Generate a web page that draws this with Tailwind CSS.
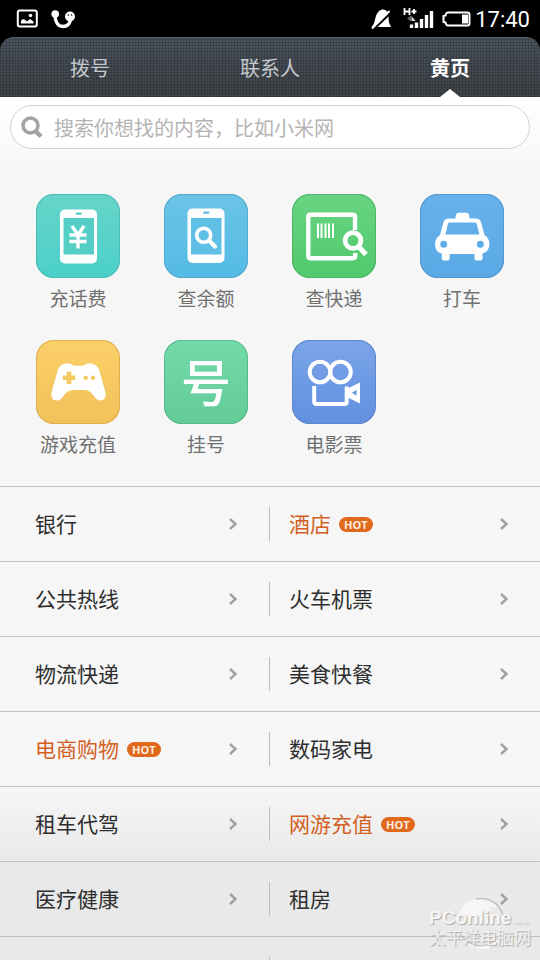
<!DOCTYPE html>
<html lang="zh-CN">
<head>
<meta charset="utf-8">
<meta name="viewport" content="width=device-width, initial-scale=1">
<title>黄页</title>
<script src="https://cdn.jsdelivr.net/npm/@tailwindcss/browser@4"></script>
</head>
<body class="flex h-screen flex-col overflow-hidden bg-black font-['Noto_Sans','Noto_Sans_CJK_SC',sans-serif]">

<svg class="hidden" aria-hidden="true">
  <symbol id="chevron" viewBox="0 0 10 14"><path d="M2 2l5.500 5L2 12" fill="none" stroke="#a0a0a0" stroke-width="2.400"/></symbol>
</svg>

<!-- Status bar -->
<div class="flex h-[37px] shrink-0 items-center justify-between pt-px pr-[10px] pl-4 text-white">
  <div class="flex items-center gap-3">
    <svg class="h-[20px] w-[22px]" viewBox="0 0 22 20" aria-hidden="true">
      <rect x="1.800" y="1.500" width="19" height="16" rx="2" fill="none" stroke="#fff" stroke-width="2"/>
      <path d="M5 14.500v-2.500c1-2 3-2.500 4.500-.8l1.500 1.300 3-2.500 3.500 2.500v2z" fill="#fff"/>
      <circle cx="14.500" cy="6.500" r="1.800" fill="#fff"/>
    </svg>
    <svg class="h-[20px] w-[26px]" viewBox="0 0 26 20" aria-hidden="true">
      <path d="M5 6c0 7 3 11.500 8 11.500S20.500 14 20.500 9" fill="none" stroke="#fff" stroke-width="3.400"/>
      <circle cx="5.200" cy="5" r="3.800" fill="#fff"/>
      <circle cx="20" cy="7.500" r="5" fill="#fff"/>
      <circle cx="18.300" cy="6" r=".8"/><circle cx="21.500" cy="6" r=".8"/>
    </svg>
  </div>
  <div class="flex items-center">
    <svg class="h-[22px] w-[22px]" viewBox="0 0 22 22" aria-hidden="true">
      <path d="M1.500 19c3.500-3.500 3-7 4.500-11C7.500 4 10 1.500 13 1.500c3.500 0 5.500 3 5.500 7 0 4 .5 7 2.500 10.500z" fill="#fff"/>
      <path d="M3.500 21.500L21.500 4" stroke="#000" stroke-width="2.200"/>
      <path d="M2 20.500L19.500 3" stroke="#fff" stroke-width="2"/>
    </svg>
    <svg class="ml-[10px] h-[22px] w-[32px]" viewBox="0 0 32 22" aria-hidden="true">
      <path d="M2.500 0v7M7.500 0v7M2.500 3.500h5M9.500 3.500h5M12 1v5" stroke="#fff" stroke-width="1.800"/>
      <path d="M5 10.500l4-3v6z" fill="#666"/>
      <path d="M9.500 16.500v3.500M14.500 14.500v5.500M19.500 11v9M24.500 7v13M29.500 3v17" stroke="#fff" stroke-width="3.400"/>
      <path d="M9.500 8l4 5h-4z" fill="#ddd"/>
    </svg>
    <svg class="ml-[8px] h-[16px] w-[30px]" viewBox="0 0 30 16" aria-hidden="true">
      <path d="M6 1.500h19.500q2 0 2 2v9q0 2-2 2H6q-1.500 0-2-1.500l-.5-1.500-2-.5v-6l2-.5.500-1.500q.5-1.500 2-1.500z" fill="none" stroke="#fff" stroke-width="2"/>
      <path d="M20 3.500h6v9h-6z" fill="#fff"/>
    </svg>
    <time class="ml-[3px] pt-px font-['Roboto',sans-serif] text-[22px] leading-6">17:40</time>
  </div>
</div>

<!-- Tabs -->
<nav class="grid h-[60px] shrink-0 grid-cols-3 rounded-t-[14px] border-t border-[#555c63] bg-[repeating-linear-gradient(0deg,#00000028_0_1px,transparent_1px_3px),repeating-linear-gradient(90deg,#00000028_0_1px,transparent_1px_3px),linear-gradient(#4b545d,#444a53_50%,#404345)] text-[20px] leading-6 text-[#c4c8cd]">
  <a href="#dial" class="flex items-center justify-center pt-[2px]">拨号</a>
  <a href="#contacts" class="flex items-center justify-center pt-[2px]">联系人</a>
  <a href="#yellow" aria-current="page" class="relative flex items-center justify-center pt-[2px] font-bold text-white">黄页
    <svg class="absolute bottom-0 left-1/2 h-2 w-5 -translate-x-1/2" viewBox="0 0 20 8" aria-hidden="true"><path d="M0 8L10 0l10 8z" fill="#fff"/></svg>
  </a>
</nav>

<main class="relative min-h-0 flex-1 overflow-hidden bg-[linear-gradient(to_bottom,#fff_0,#f6f6f6_80px,#f6f6f6_80%,#e9e9e9_89%)]">
  <!-- Search -->
  <form class="px-[10px] pt-2" role="search">
    <div class="flex h-[44px] items-center gap-[11px] rounded-full border border-[#d3d3d3] bg-white pl-[10px]">
      <svg class="h-[24px] w-[22px] shrink-0" viewBox="0 0 22 24" aria-hidden="true">
        <circle cx="9.500" cy="10.500" r="7.500" fill="none" stroke="#a3a3a3" stroke-width="3.600"/>
        <path d="M14.500 16l5.500 5.500" stroke="#a3a3a3" stroke-width="4.400"/>
      </svg>
      <input type="search" aria-label="搜索" class="min-w-0 flex-1 bg-transparent pt-1 text-[20px] leading-6 outline-none placeholder:text-[#b4b4b4]" placeholder="搜索你想找的内容，比如小米网">
    </div>
  </form>

  <!-- Services -->
  <section class="grid grid-cols-4 gap-y-[25px] px-[14px] pt-[45px] pb-[25px] text-[19px] leading-8 text-[#707070]">
    <a href="#" class="flex flex-col items-center">
      <svg class="h-[84px] w-[84px] rounded-[18px] bg-linear-to-b from-[#66d4c8] to-[#4bd0cb] ring-1 ring-[#4dbdb4] ring-inset" viewBox="0 0 84 84" aria-hidden="true">
        <rect x="24" y="15.500" width="37" height="54" rx="5" fill="#fff"/>
        <path d="M27.500 24H58v36.500H27.500z" fill="#55cfc6"/>
        <rect x="39.500" y="18.500" width="6.500" height="2.200" rx="1" fill="#55cfc6"/>
        <path d="M36 32l6 9 6-9M42 41v13.500M33.500 41h17M33.500 47.500h17" fill="none" stroke="#fff" stroke-width="3.400"/>
      </svg>
      <span class="pt-[5px]">充话费</span>
    </a>
    <a href="#" class="flex flex-col items-center">
      <svg class="h-[84px] w-[84px] rounded-[18px] bg-linear-to-b from-[#6bc4e6] to-[#54bbe5] ring-1 ring-[#55a9cc] ring-inset" viewBox="0 0 84 84" aria-hidden="true">
        <rect x="23.500" y="14.500" width="37" height="54.500" rx="5" fill="#fff"/>
        <path d="M27 24h30.500v36.500H27z" fill="#60bfe5"/>
        <rect x="39" y="17.500" width="6.500" height="2.200" rx="1" fill="#60bfe5"/>
        <circle cx="39.700" cy="41.300" r="7" fill="none" stroke="#fff" stroke-width="3.600"/>
        <path d="M45 46.500l6 6" stroke="#fff" stroke-width="4.200" stroke-linecap="round"/>
      </svg>
      <span class="pt-[5px]">查余额</span>
    </a>
    <a href="#" class="flex flex-col items-center">
      <svg class="h-[84px] w-[84px] rounded-[18px] bg-linear-to-b from-[#68d483] to-[#50c96c] ring-1 ring-[#4db465] ring-inset" viewBox="0 0 84 84" aria-hidden="true">
        <path d="M63 36V23q0-2.200-2.200-2.200H18.500q-2.200 0-2.200 2.200v39q0 2.200 2.200 2.200H61q2.200 0 2.200-2.200v-3" fill="none" stroke="#fff" stroke-width="4.400"/>
        <path d="M26 29.500v14.500M29.500 29.500v14.500M33.500 29.500v14.500M37 29.500v14.500M41 29.500v14.500" stroke="#fff" stroke-width="2"/>
        <circle cx="61" cy="46.500" r="7.900" fill="none" stroke="#fff" stroke-width="4.800"/>
        <path d="M67 53l7 7.500" stroke="#fff" stroke-width="5"/>
      </svg>
      <span class="pt-[5px]">查快递</span>
    </a>
    <a href="#" class="flex flex-col items-center">
      <svg class="h-[84px] w-[84px] rounded-[18px] bg-linear-to-b from-[#67b1ea] to-[#59a9e6] ring-1 ring-[#5596cc] ring-inset" viewBox="0 0 84 84" aria-hidden="true">
        <path d="M35 25.500l1.200-5q.5-1.700 2-1.700h8.600q1.500 0 2 1.700l1.200 5z" fill="#fff"/>
        <path fill-rule="evenodd" fill="#fff" d="M29 24.500h27q4 0 5 3.500l3.500 13q5 3 5 10-1 7-7 8.500v5q0 2-2 2h-4q-2 0-2-2V60H29.700v4.500q0 2-2 2h-4q-2 0-2-2v-5Q15.500 58 15 51q0-7 5-10L23.500 28q1.200-3.500 5.500-3.500zM29.500 28.500q-1.200 0-1.600 1.400L25.500 40.500h34L56.800 30q-.4-1.500-1.800-1.500zM23.700 46.800a3.500 3.500 0 1 0 0 7 3.500 3.500 0 1 0 0-7zM60.300 46.800a3.500 3.500 0 1 0 0 7 3.500 3.500 0 1 0 0-7z"/>
      </svg>
      <span class="pt-[5px]">打车</span>
    </a>
    <a href="#" class="flex flex-col items-center">
      <svg class="h-[84px] w-[84px] rounded-[18px] bg-linear-to-b from-[#fbd068] to-[#f2c15a] ring-1 ring-[#dcb055] ring-inset" viewBox="0 0 84 84" aria-hidden="true">
        <path d="M30 23.500q4-.8 6.500 1.500 1 .7 2 .7h8q1 0 2-.7 2.500-2.300 6.500-1.500 5.500.5 8 6l6 21c1.800 6-.5 10-4.500 10q-3.500 0-6.500-4.500-4-6-9-6h-12.500q-5 0-9 6-3 4.500-6.500 4.500c-4 0-7-3-5-10l6-21q2-5.500 8-6z" fill="#fff"/>
        <path d="M33 31.500v12.400M26.800 37.700h12.400" stroke="#f6c860" stroke-width="4.600"/>
        <circle cx="49.700" cy="37.700" r="2.200" fill="#f6c860"/><circle cx="57" cy="37.700" r="2.200" fill="#f6c860"/>
      </svg>
      <span class="pt-[5px]">游戏充值</span>
    </a>
    <a href="#" class="flex flex-col items-center">
      <span class="flex h-[84px] w-[84px] items-center justify-center rounded-[18px] bg-linear-to-b from-[#72dba9] to-[#62cb98] pb-1 font-['Noto_Sans_CJK_SC',sans-serif] text-[50px] leading-[50px] font-medium text-white ring-1 ring-[#58b88a] ring-inset" aria-hidden="true">号</span>
      <span class="pt-[5px]">挂号</span>
    </a>
    <a href="#" class="flex flex-col items-center">
      <svg class="h-[84px] w-[84px] rounded-[18px] bg-linear-to-b from-[#7aa5e9] to-[#628fdf] ring-1 ring-[#5f86c9] ring-inset" viewBox="0 0 84 84" aria-hidden="true">
        <circle cx="28" cy="32" r="10.300" fill="none" stroke="#fff" stroke-width="4"/>
        <circle cx="48.500" cy="32" r="10.300" fill="none" stroke="#fff" stroke-width="4"/>
        <path d="M22.200 46v15.500q0 2.500 2.500 2.500h27.500q2.500 0 2.500-2.500V46.500" fill="none" stroke="#fff" stroke-width="4"/>
        <path fill-rule="evenodd" d="M53.500 49.500L68 42.500v21l-14.500-7zM60 52.700l4.500 3v-6z" fill="#fff"/>
      </svg>
      <span class="pt-[5px]">电影票</span>
    </a>
  </section>

  <!-- Categories -->
  <ul class="text-[21px] leading-6 text-[#2e2e2e]">
    <li class="grid h-[75px] grid-cols-2 items-center border-t border-[#c0c2be]">
      <a href="#" class="flex h-[34px] items-center gap-2 border-r border-[#bcbcbc] pr-[31px] pl-[35px]">银行<svg class="ml-auto h-[14px] w-[10px]" aria-hidden="true"><use href="#chevron"/></svg></a>
      <a href="#" class="flex h-[34px] items-center gap-2 pr-[31px] pl-[19px] text-[#d2601f]">酒店<span class="rounded-full bg-[#e0691c] px-[5px] font-['Open_Sans',sans-serif] text-[11px] leading-[15px] font-bold text-[#fdeee0]">HOT</span><svg class="ml-auto h-[14px] w-[10px]" aria-hidden="true"><use href="#chevron"/></svg></a>
    </li>
    <li class="grid h-[75px] grid-cols-2 items-center border-t border-[#c0c2be]">
      <a href="#" class="flex h-[34px] items-center gap-2 border-r border-[#bcbcbc] pr-[31px] pl-[35px]">公共热线<svg class="ml-auto h-[14px] w-[10px]" aria-hidden="true"><use href="#chevron"/></svg></a>
      <a href="#" class="flex h-[34px] items-center gap-2 pr-[31px] pl-[19px]">火车机票<svg class="ml-auto h-[14px] w-[10px]" aria-hidden="true"><use href="#chevron"/></svg></a>
    </li>
    <li class="grid h-[75px] grid-cols-2 items-center border-t border-[#c0c2be]">
      <a href="#" class="flex h-[34px] items-center gap-2 border-r border-[#bcbcbc] pr-[31px] pl-[35px]">物流快递<svg class="ml-auto h-[14px] w-[10px]" aria-hidden="true"><use href="#chevron"/></svg></a>
      <a href="#" class="flex h-[34px] items-center gap-2 pr-[31px] pl-[19px]">美食快餐<svg class="ml-auto h-[14px] w-[10px]" aria-hidden="true"><use href="#chevron"/></svg></a>
    </li>
    <li class="grid h-[75px] grid-cols-2 items-center border-t border-[#c0c2be]">
      <a href="#" class="flex h-[34px] items-center gap-2 border-r border-[#bcbcbc] pr-[31px] pl-[35px] text-[#d2601f]">电商购物<span class="rounded-full bg-[#e0691c] px-[5px] font-['Open_Sans',sans-serif] text-[11px] leading-[15px] font-bold text-[#fdeee0]">HOT</span><svg class="ml-auto h-[14px] w-[10px]" aria-hidden="true"><use href="#chevron"/></svg></a>
      <a href="#" class="flex h-[34px] items-center gap-2 pr-[31px] pl-[19px]">数码家电<svg class="ml-auto h-[14px] w-[10px]" aria-hidden="true"><use href="#chevron"/></svg></a>
    </li>
    <li class="grid h-[75px] grid-cols-2 items-center border-t border-[#c0c2be]">
      <a href="#" class="flex h-[34px] items-center gap-2 border-r border-[#bcbcbc] pr-[31px] pl-[35px]">租车代驾<svg class="ml-auto h-[14px] w-[10px]" aria-hidden="true"><use href="#chevron"/></svg></a>
      <a href="#" class="flex h-[34px] items-center gap-2 pr-[31px] pl-[19px] text-[#d2601f]">网游充值<span class="rounded-full bg-[#e0691c] px-[5px] font-['Open_Sans',sans-serif] text-[11px] leading-[15px] font-bold text-[#fdeee0]">HOT</span><svg class="ml-auto h-[14px] w-[10px]" aria-hidden="true"><use href="#chevron"/></svg></a>
    </li>
    <li class="grid h-[75px] grid-cols-2 items-center border-t border-[#c0c2be]">
      <a href="#" class="flex h-[34px] items-center gap-2 border-r border-[#bcbcbc] pr-[31px] pl-[35px]">医疗健康<svg class="ml-auto h-[14px] w-[10px]" aria-hidden="true"><use href="#chevron"/></svg></a>
      <a href="#" class="flex h-[34px] items-center gap-2 pr-[31px] pl-[19px]">租房<svg class="ml-auto h-[14px] w-[10px]" aria-hidden="true"><use href="#chevron"/></svg></a>
    </li>
    <li class="grid h-[75px] grid-cols-2 items-center border-t border-[#c0c2be]">
      <span class="h-[34px] border-r border-[#bcbcbc]"></span>
    </li>
  </ul>

  <!-- Watermark -->
  <div class="absolute right-2 bottom-3 flex w-[103px] flex-col text-[#f6f6f6] [text-shadow:1px_1px_1px_#a8a8a8]">
    <svg class="absolute -top-3 left-[26px] h-[54px] w-[54px]" viewBox="0 0 54 54" aria-hidden="true">
      <path d="M3 20C7 7 17 2 27 2q8 0 14 4-10-3-18-1 12 0 20 5l-3 2-6-2 3 4-6 1-5-2 2 4-6 3H3z" fill="#f7f7f7"/>
      <path d="M21 3q20-3 27 16M7 41q20 19 40-2" fill="none" stroke="#c0c0c0" stroke-width="1.500"/>
      <path d="M5 40q20 22 42-1-7 15-21 14T5 40z" fill="#f7f7f7"/>
    </svg>
    <span class="relative flex items-end font-['Liberation_Sans',sans-serif] text-[19px] leading-5 font-bold">PConline<span class="text-[5px] leading-3 font-normal">.com.cn</span></span>
    <span class="relative text-[17px] leading-5 text-[#f0f0f0]">太平洋电脑网</span>
  </div>
</main>
</body>
</html>
